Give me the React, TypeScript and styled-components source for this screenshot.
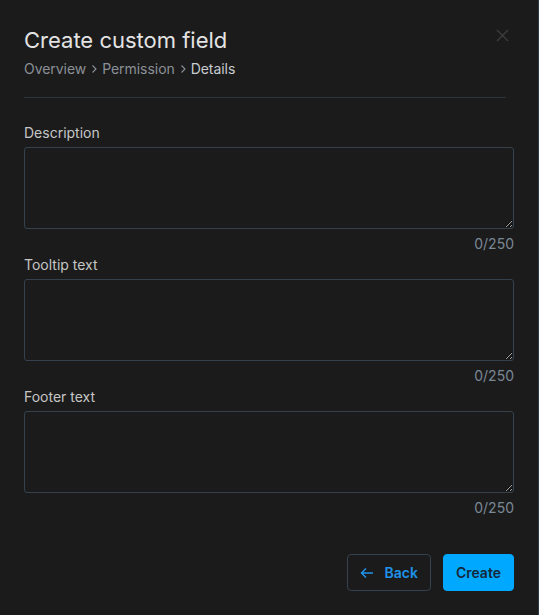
import React from "react";
import styled, { createGlobalStyle } from "styled-components";

const Global = createGlobalStyle`
  html, body { margin: 0; padding: 0; background: #1b1b1b; }
  body { font-family: Inter, "Noto Sans", sans-serif; }
  * { box-sizing: border-box; }
`;

const Dialog = styled.div`
  width: 539px;
  height: 615px;
  background: #1b1b1b;
  border-right: 1px solid #2c3946;
  padding: 24px 25px 0 24px;
  display: flex;
  flex-direction: column;
  position: relative;
`;

const Header = styled.div`
  display: flex;
  flex-direction: column;
  margin-right: 7px;
  padding-bottom: 18px;
  border-bottom: 1px solid #2b353f;
`;

const Title = styled.h1`
  margin: 0;
  font-size: 22px;
  font-weight: 400;
  line-height: 32px;
  color: #e3e3e3;
`;

const Crumbs = styled.div`
  margin-top: 3px;
  font-size: 14px;
  line-height: 20px;
  color: #8b9097;
  display: flex;
  align-items: center;
  letter-spacing: -0.05px;
`;

const Crumb = styled.span<{ $active?: boolean }>`
  color: ${(p) => (p.$active ? "#c8ccd0" : "#8b9097")};
`;

const Sep = styled.span`
  margin: 0 4px;
  display: inline-flex;
  color: #8b9097;
`;

const Close = styled.button`
  position: absolute;
  top: 28px;
  right: 29px;
  width: 14px;
  height: 14px;
  padding: 0;
  border: none;
  background: none;
  color: #3d3d3d;
  display: flex;
  align-items: center;
  justify-content: center;
`;

const Fields = styled.div`
  display: flex;
  flex-direction: column;
  gap: 1px;
  margin-top: 25px;
`;

const Field = styled.div`
  display: flex;
  flex-direction: column;
`;

const Label = styled.label`
  font-size: 14px;
  line-height: 20px;
  color: #c6c6c6;
  margin-bottom: 4px;
`;

const Area = styled.textarea`
  width: 490px;
  height: 82px;
  background: #1b1b1b;
  border: 1px solid #34414e;
  border-radius: 3px;
  color: #ddd;
  font-family: inherit;
  font-size: 14px;
  padding: 8px;
  outline: none;
`;

const Counter = styled.div`
  margin-top: 5px;
  width: 490px;
  text-align: right;
  font-size: 14px;
  line-height: 20px;
  color: #7a8896;
`;

const Footer = styled.div`
  margin-top: 36px;
  width: 490px;
  display: flex;
  justify-content: flex-end;
  gap: 12px;
`;

const Button = styled.button<{ $primary?: boolean }>`
  height: 37px;
  border-radius: 4px;
  font-family: inherit;
  font-size: 14px;
  font-weight: 600;
  display: flex;
  align-items: center;
  gap: 10px;
  padding: 0 12px;
  cursor: pointer;
  border: 1px solid ${(p) => (p.$primary ? "#00a8ff" : "#34414e")};
  background: ${(p) => (p.$primary ? "#00a8ff" : "transparent")};
  color: ${(p) => (p.$primary ? "#14283a" : "#1f93ea")};
`;

const Chevron = () => (
  <svg width="8" height="10" viewBox="0 0 8 10" fill="none">
    <path d="M2.5 1.5 L6 5 L2.5 8.5" stroke="currentColor" strokeWidth="1.1" />
  </svg>
);

const fields = ["Description", "Tooltip text", "Footer text"];

export default function App() {
  return (
    <>
      <Global />
      <Dialog>
        <Header>
          <Title>Create custom field</Title>
          <Crumbs>
            <Crumb>Overview</Crumb>
            <Sep><Chevron /></Sep>
            <Crumb>Permission</Crumb>
            <Sep><Chevron /></Sep>
            <Crumb $active>Details</Crumb>
          </Crumbs>
        </Header>
        <Close aria-label="close">
          <svg width="13" height="13" viewBox="0 0 13 13">
            <path d="M1 1 L12 12 M12 1 L1 12" stroke="currentColor" strokeWidth="1.4" />
          </svg>
        </Close>
        <Fields>
          {fields.map((f) => (
            <Field key={f}>
              <Label>{f}</Label>
              <Area />
              <Counter>0/250</Counter>
            </Field>
          ))}
        </Fields>
        <Footer>
          <Button>
            <svg width="14" height="12" viewBox="0 0 14 12" fill="none">
              <path d="M13 6 H1.5 M6 1.5 L1.5 6 L6 10.5" stroke="currentColor" strokeWidth="1.5" />
            </svg>
            Back
          </Button>
          <Button $primary>Create</Button>
        </Footer>
      </Dialog>
    </>
  );
}
